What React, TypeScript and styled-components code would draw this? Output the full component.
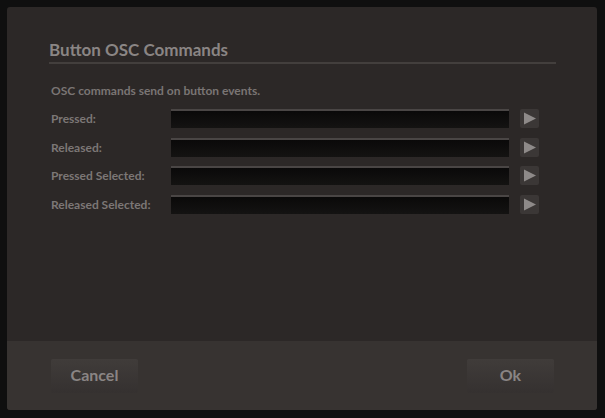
import styled, { createGlobalStyle } from "styled-components";

const GlobalStyle = createGlobalStyle`
    html, body {
        margin: 0;
        padding: 0;
        background: #0f0f0f;
    }
    body {
        font-family: Lato, "Open Sans", sans-serif;
    }
`

const Screen = styled.div`
    width: 605px;
    height: 418px;
    box-sizing: border-box;
    padding: 7px 8px 8px 7px;
    background: #0f0f0f;
    display: flex;
`

const Dialog = styled.div`
    flex: 1;
    display: flex;
    flex-direction: column;
    background: #2c2827;
    border-radius: 3px;
    overflow: hidden;
`

const Body = styled.div`
    flex: 1;
    padding: 33px 41px 0 42px;
    display: flex;
    flex-direction: column;
`

const Title = styled.h1`
    margin: 0;
    font-size: 17px;
    font-weight: 700;
    color: #8a8584;
    line-height: 20px;
    padding-bottom: 2px;
    border-bottom: 2px solid #433f3d;
`

const Intro = styled.p`
    margin: 20px 0 11px 2px;
    font-size: 12px;
    font-weight: 700;
    color: #7a7574;
    line-height: 14px;
`

const Rows = styled.div`
    display: flex;
    flex-direction: column;
    gap: 9.7px;
`

const Row = styled.div`
    display: flex;
    align-items: center;
    height: 19px;
`

const Label = styled.span`
    width: 120px;
    padding-left: 2px;
    font-size: 12px;
    font-weight: 700;
    color: #7c7776;
`

const Field = styled.input`
    width: 338px;
    height: 19px;
    box-sizing: border-box;
    border: none;
    border-top: 2px solid #4a4645;
    background: linear-gradient(#0a0909, #141312);
    outline: none;
    color: #aaa;
    padding: 0 4px;
`

const SendButton = styled.button`
    margin-left: 11px;
    width: 19px;
    height: 19px;
    padding: 0;
    border: none;
    border-radius: 2px;
    background: #3b3736;
    display: flex;
    align-items: center;
    justify-content: center;
`

const Footer = styled.div`
    height: 69px;
    background: #373331;
    display: flex;
    justify-content: space-between;
    align-items: flex-start;
    padding: 18px 43px 0 44px;
    box-sizing: border-box;
`

const FooterButton = styled.button`
    width: 87px;
    height: 34px;
    border: none;
    border-radius: 2px;
    padding: 0 0 3px;
    background: linear-gradient(#403c3a, #353130);
    color: #8a8584;
    font-family: Lato, "Open Sans", sans-serif;
    font-size: 16px;
    font-weight: 700;
`

const Play = () => (
    <svg width="15" height="15" viewBox="0 0 15 15">
        <polygon points="2,1.5 14,7.5 2,13.5" fill="#8e8a89" />
    </svg>
)

const rows = ["Pressed:", "Released:", "Pressed Selected:", "Released Selected:"];

const App = () => {
    return (
        <>
            <GlobalStyle />
            <Screen>
                <Dialog>
                    <Body>
                        <Title>Button OSC Commands</Title>
                        <Intro>OSC commands send on button events.</Intro>
                        <Rows>
                            {
                                rows.map((label) => (
                                    <Row key={label}>
                                        <Label>{label}</Label>
                                        <Field />
                                        <SendButton><Play /></SendButton>
                                    </Row>
                                ))
                            }
                        </Rows>
                    </Body>
                    <Footer>
                        <FooterButton>Cancel</FooterButton>
                        <FooterButton>Ok</FooterButton>
                    </Footer>
                </Dialog>
            </Screen>
        </>
    );
}

export default App;
